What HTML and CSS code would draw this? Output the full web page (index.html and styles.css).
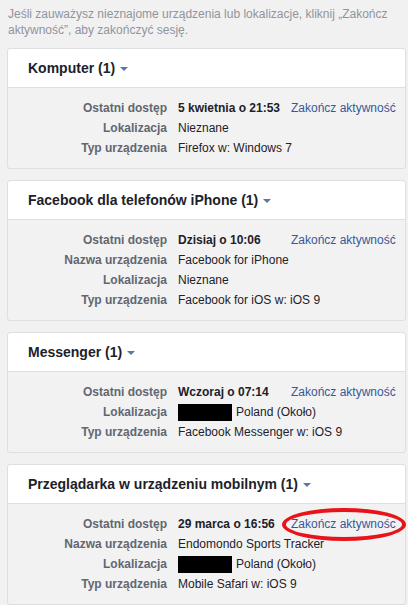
FILE: index.html
```html
<!DOCTYPE html>
<html lang="pl">
<head>
<meta charset="utf-8">
<link rel="stylesheet" href="styles.css">
</head>
<body>
<p class="intro">Jeśli zauważysz nieznajome urządzenia lub lokalizacje, kliknij „Zakończ aktywność”, aby zakończyć sesję.</p>

<div class="card">
  <div class="card-head">Komputer (1)<span class="caret"></span></div>
  <div class="card-body">
    <div class="row"><span class="lbl">Ostatni dostęp</span><span class="val time">5 kwietnia o 21:53</span><a class="link">Zakończ aktywność</a></div>
    <div class="row"><span class="lbl">Lokalizacja</span><span class="val">Nieznane</span></div>
    <div class="row"><span class="lbl">Typ urządzenia</span><span class="val">Firefox w: Windows 7</span></div>
  </div>
</div>

<div class="card">
  <div class="card-head">Facebook dla telefonów iPhone (1)<span class="caret"></span></div>
  <div class="card-body">
    <div class="row"><span class="lbl">Ostatni dostęp</span><span class="val time">Dzisiaj o 10:06</span><a class="link">Zakończ aktywność</a></div>
    <div class="row"><span class="lbl">Nazwa urządzenia</span><span class="val">Facebook for iPhone</span></div>
    <div class="row"><span class="lbl">Lokalizacja</span><span class="val">Nieznane</span></div>
    <div class="row"><span class="lbl">Typ urządzenia</span><span class="val">Facebook for iOS w: iOS 9</span></div>
  </div>
</div>

<div class="card">
  <div class="card-head">Messenger (1)<span class="caret"></span></div>
  <div class="card-body">
    <div class="row"><span class="lbl">Ostatni dostęp</span><span class="val time">Wczoraj o 07:14</span><a class="link">Zakończ aktywność</a></div>
    <div class="row"><span class="lbl">Lokalizacja</span><span class="val"><span class="redact"></span>Poland (Około)</span></div>
    <div class="row"><span class="lbl">Typ urządzenia</span><span class="val">Facebook Messenger w: iOS 9</span></div>
  </div>
</div>

<div class="card">
  <div class="card-head">Przeglądarka w urządzeniu mobilnym (1)<span class="caret"></span></div>
  <div class="card-body">
    <div class="row"><span class="lbl">Ostatni dostęp</span><span class="val time">29 marca o 16:56</span><a class="link circled">Zakończ aktywnośc</a></div>
    <div class="row"><span class="lbl">Nazwa urządzenia</span><span class="val">Endomondo Sports Tracker</span></div>
    <div class="row"><span class="lbl">Lokalizacja</span><span class="val"><span class="redact"></span>Poland (Około)</span></div>
    <div class="row"><span class="lbl">Typ urządzenia</span><span class="val">Mobile Safari w: iOS 9</span></div>
  </div>
</div>
</body>
</html>
```

FILE: styles.css
```css
html, body {
  margin: 0;
  padding: 0;
  background: #f1f1f1;
  font-family: "Liberation Sans", Arial, sans-serif;
  font-size: 12px;
  color: #1d2129;
  overflow: hidden;
}

.intro {
  margin: 6px 0 10px 8px;
  line-height: 16px;
  color: #90949c;
  width: 390px;
}

.card {
  margin: 0 2px 11px 7px;
  border: 1px solid #dddfe2;
  border-radius: 3px;
  background: #f2f2f2;
}

.card-head {
  height: 38px;
  background: #fff;
  border-bottom: 1px solid #dddfe2;
  border-radius: 3px 3px 0 0;
  padding-left: 20px;
  display: flex;
  align-items: center;
  font-size: 14px;
  font-weight: bold;
  color: #1d2129;
}

.caret {
  display: inline-block;
  width: 0;
  height: 0;
  margin-left: 5px;
  margin-top: 2px;
  border-left: 4px solid transparent;
  border-right: 4px solid transparent;
  border-top: 4px solid #5d74a6;
}

.card-body {
  padding: 10px 0;
}

.row {
  display: flex;
  align-items: center;
  height: 20px;
  line-height: 20px;
  white-space: nowrap;
}

.lbl {
  width: 159px;
  text-align: right;
  font-weight: bold;
  color: #616770;
}

.val {
  margin-left: 11px;
  display: flex;
  align-items: center;
}

.val.time {
  width: 113px;
  font-weight: bold;
}

.link {
  color: #365899;
  cursor: pointer;
}

.circled {
  position: relative;
}

.circled::after {
  content: "";
  position: absolute;
  left: -9px;
  top: -6px;
  width: 116px;
  height: 25px;
  border: 4px solid #e8141a;
  border-radius: 50%;
}

.redact {
  display: inline-block;
  width: 54px;
  height: 17px;
  background: #000;
  margin-right: 4px;
}
```
